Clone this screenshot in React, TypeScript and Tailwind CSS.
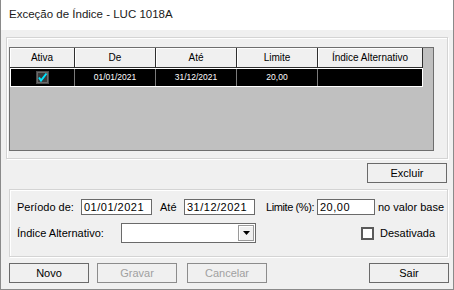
import React from 'react';

const font = { fontFamily: '"Liberation Sans", Arial, sans-serif' };

function Button({ label, disabled }: { label: string; disabled?: boolean }) {
  return (
    <div
      className={`w-[80px] h-[20px] flex items-center justify-center border bg-[#f0f0f0] text-[11px] ${
        disabled ? 'border-[#8c8c8c] text-[#a0a0a0]' : 'border-[#6a6a6a] text-black'
      }`}
    >
      {label}
    </div>
  );
}

function CheckIcon() {
  return (
    <svg width="13" height="13" viewBox="0 0 13 13">
      <rect x="0" y="0" width="13" height="13" fill="#4a4a4a" />
      <rect x="1.5" y="1.5" width="10" height="10" fill="#3a3a3a" stroke="#6a6a6a" strokeWidth="1" />
      <path d="M3 6.5 L5 9.5 L10.5 2.5" fill="none" stroke="#00e5ff" strokeWidth="2" />
    </svg>
  );
}

const cols = [
  { title: 'Ativa', w: 'w-[65px]' },
  { title: 'De', w: 'w-[81px]' },
  { title: 'Até', w: 'w-[81px]' },
  { title: 'Limite', w: 'w-[81px]' },
  { title: 'Índice Alternativo', w: 'w-[105px]' },
];

function Grid() {
  return (
    <div className="w-[425px] h-[104px] border border-[#6e6e6e] bg-[#c0c0c0] flex flex-col">
      <div className="flex h-[20px]">
        {cols.map((c) => (
          <div
            key={c.title}
            className={`${c.w} h-full flex items-center justify-center bg-[#f0f0f0] border-r border-b border-[#2e2e2e] shadow-[inset_1px_1px_0_#ffffff] text-[10px] text-black whitespace-nowrap`}
          >
            {c.title}
          </div>
        ))}
      </div>
      <div className="w-[413px] h-[19px] bg-black border border-white flex text-[8.5px] text-white">
        <div className="w-[64px] flex items-center justify-center border-r border-[#7a7a7a]">
          <CheckIcon />
        </div>
        <div className="w-[81px] flex items-center justify-center border-r border-[#7a7a7a]">01/01/2021</div>
        <div className="w-[81px] flex items-center justify-center border-r border-[#7a7a7a]">31/12/2021</div>
        <div className="w-[81px] flex items-center justify-center border-r border-[#7a7a7a]">20,00</div>
        <div className="flex-1" />
      </div>
    </div>
  );
}

function Input({ value, w }: { value: string; w: string }) {
  return (
    <div
      className={`${w} shrink-0 h-[16px] bg-white border border-[#6a6a6a] flex items-center pl-[2px] text-[11px] tracking-[0.5px] text-black whitespace-nowrap`}
    >
      {value}
    </div>
  );
}

export default function App() {
  return (
    <div
      className="w-[454px] h-[290px] bg-[#f0f0f0] border-x border-b border-[#8a8a8a] flex flex-col text-black"
      style={font}
    >
      <div className="h-[30px] bg-white flex items-center pl-[8px] text-[11.5px] text-[#1a1a1a]">
        Exceção de Índice - LUC 1018A
      </div>

      <div className="ml-[5px] mt-[7px] w-[442px] h-[122px] border border-[#d4d4d4] shadow-[inset_1px_1px_0_#ffffff,1px_1px_0_#ffffff] pl-[2px] pt-[9px]">
        <Grid />
      </div>

      <div className="flex justify-end pr-[6px] mt-[4px]">
        <Button label="Excluir" />
      </div>

      <div className="ml-[8px] mt-[6px] w-[439px] h-[68px] border border-[#d4d4d4] shadow-[inset_1px_1px_0_#ffffff,1px_1px_0_#ffffff] pt-[9px] pl-[7px] flex flex-col gap-[8px] text-[11px] whitespace-nowrap">
        <div className="flex items-center h-[16px]">
          <span className="w-[64px] shrink-0">Período de:</span>
          <Input value="01/01/2021" w="w-[71px]" />
          <span className="ml-[8px] w-[24px] shrink-0">Até</span>
          <Input value="31/12/2021" w="w-[71px]" />
          <span className="ml-[11px] w-[51px] shrink-0 tracking-[-0.4px]">Limite (%):</span>
          <Input value="20,00" w="w-[58px]" />
          <span className="ml-[3px] shrink-0">no valor base</span>
        </div>
        <div className="flex items-center h-[20px]">
          <span className="w-[104px] shrink-0">Índice Alternativo:</span>
          <div className="w-[135px] shrink-0 h-[20px] bg-white border border-[#6a6a6a] flex justify-end p-px">
            <div className="w-[16px] h-full bg-[#f0f0f0] border border-[#9a9a9a] shadow-[inset_1px_1px_0_#ffffff] flex items-center justify-center">
              <svg width="7" height="4" viewBox="0 0 7 4">
                <path d="M0 0 H7 L3.5 4 Z" fill="#000" />
              </svg>
            </div>
          </div>
          <div className="ml-[105px] shrink-0 w-[13px] h-[13px] bg-white border-2 border-[#5a5a5a]" />
          <span className="ml-[6px] shrink-0">Desativada</span>
        </div>
      </div>

      <div className="flex mt-[6px] ml-[8px] text-[11px]">
        <Button label="Novo" />
        <div className="ml-[8px]">
          <Button label="Gravar" disabled />
        </div>
        <div className="ml-[10px]">
          <Button label="Cancelar" disabled />
        </div>
        <div className="ml-[102px]">
          <Button label="Sair" />
        </div>
      </div>
    </div>
  );
}
